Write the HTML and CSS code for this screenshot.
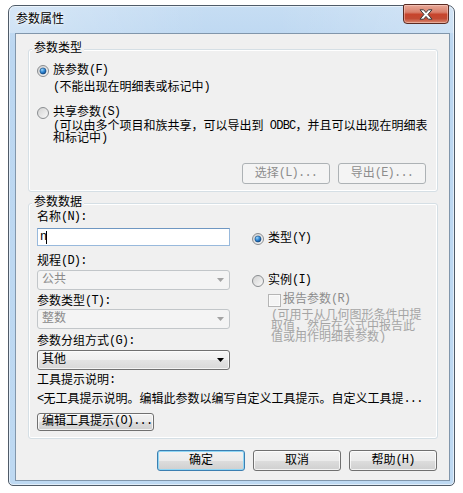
FILE: index.html
```html
<!DOCTYPE html>
<html lang="zh-CN">
<head>
<meta charset="utf-8">
<title>参数属性</title>
<link rel="stylesheet" href="styles.css">
</head>
<body>
<div class="window">
  <div class="titlebar">
    <span class="title">参数属性</span>
    <div class="close">
      <svg width="14" height="11" viewBox="0 0 14 11"><polygon points="1,0.8 4.6,0.8 7,3.6 9.4,0.8 13,0.8 9,5.4 13,10.2 9.4,10.2 7,7.4 4.6,10.2 1,10.2 5,5.4" fill="#fff" stroke="#3a3a3a" stroke-width="1" stroke-linejoin="round"/></svg>
    </div>
  </div>
  <div class="client">
    <fieldset class="group g1">
      <legend>参数类型</legend>
      <div class="g1-body">
        <div class="opt">
          <svg class="radio" width="12" height="12" viewBox="0 0 12 12"><defs><linearGradient id="ra1" x1="0" y1="0" x2="1" y2="1"><stop offset="0" stop-color="#d0d0d0"/><stop offset="1" stop-color="#fbfbfb"/></linearGradient><radialGradient id="rd1" cx="0.35" cy="0.3" r="0.8"><stop offset="0" stop-color="#9bd6fb"/><stop offset="0.5" stop-color="#2f86d4"/><stop offset="1" stop-color="#0c3f7a"/></radialGradient></defs><circle cx="6" cy="6" r="5.5" fill="url(#ra1)" stroke="#8a8d90"/><circle cx="6" cy="6" r="3.1" fill="url(#rd1)" stroke="#1a4a7c" stroke-width="0.6"/></svg>
          <span>族参数<span class="en">(F)</span></span>
        </div>
        <div class="hint h1"><span class="en">(</span>不能出现在明细表或标记中<span class="en">)</span></div>
        <div class="opt o2">
          <svg class="radio" width="12" height="12" viewBox="0 0 12 12"><defs><linearGradient id="ra2" x1="0" y1="0" x2="1" y2="1"><stop offset="0" stop-color="#d0d0d0"/><stop offset="1" stop-color="#fbfbfb"/></linearGradient></defs><circle cx="6" cy="6" r="5.5" fill="url(#ra2)" stroke="#8a8d90"/></svg>
          <span>共享参数<span class="en">(S)</span></span>
        </div>
        <div class="hint h2"><span class="en">(</span>可以由多个项目和族共享，可以导出到<span class="en"> ODBC</span>，并且可以出现在明细表<br>和标记中<span class="en">)</span></div>
        <div class="btnrow">
          <button class="btn dis" type="button">选择<span class="en">(L)...</span></button>
          <button class="btn dis" type="button">导出<span class="en">(E)...</span></button>
        </div>
      </div>
    </fieldset>

    <fieldset class="group g2">
      <legend>参数数据</legend>
      <div class="g2-body">
        <div class="cols">
          <div class="leftcol">
            <div class="lbl">名称<span class="en">(N):</span></div>
            <div class="input"><span class="en">n</span><span class="caret"></span></div>
            <div class="lbl l2">规程<span class="en">(D):</span></div>
            <div class="select dis s1"><span>公共</span><svg class="arrow" width="7" height="4" viewBox="0 0 7 4"><polygon points="0,0 7,0 3.5,4" fill="#a3a3a3"/></svg></div>
            <div class="lbl l3">参数类型<span class="en">(T):</span></div>
            <div class="select dis"><span>整数</span><svg class="arrow" width="7" height="4" viewBox="0 0 7 4"><polygon points="0,0 7,0 3.5,4" fill="#a3a3a3"/></svg></div>
            <div class="lbl l4">参数分组方式<span class="en">(G):</span></div>
            <div class="select s3"><span>其他</span><svg class="arrow" width="7" height="4" viewBox="0 0 7 4"><polygon points="0,0 7,0 3.5,4" fill="#000"/></svg></div>
          </div>
          <div class="rightcol">
            <div class="opt r1">
              <svg class="radio" width="12" height="12" viewBox="0 0 12 12"><defs><linearGradient id="ra3" x1="0" y1="0" x2="1" y2="1"><stop offset="0" stop-color="#d0d0d0"/><stop offset="1" stop-color="#fbfbfb"/></linearGradient><radialGradient id="rd3" cx="0.35" cy="0.3" r="0.8"><stop offset="0" stop-color="#9bd6fb"/><stop offset="0.5" stop-color="#2f86d4"/><stop offset="1" stop-color="#0c3f7a"/></radialGradient></defs><circle cx="6" cy="6" r="5.5" fill="url(#ra3)" stroke="#8a8d90"/><circle cx="6" cy="6" r="3.1" fill="url(#rd3)" stroke="#1a4a7c" stroke-width="0.6"/></svg>
              <span>类型<span class="en">(Y)</span></span>
            </div>
            <div class="opt r2">
              <svg class="radio" width="12" height="12" viewBox="0 0 12 12"><defs><linearGradient id="ra4" x1="0" y1="0" x2="1" y2="1"><stop offset="0" stop-color="#d0d0d0"/><stop offset="1" stop-color="#fbfbfb"/></linearGradient></defs><circle cx="6" cy="6" r="5.5" fill="url(#ra4)" stroke="#8a8d90"/></svg>
              <span>实例<span class="en">(I)</span></span>
            </div>
            <div class="check">
              <span class="box"></span>
              <span>报告参数<span class="en">(R)</span></span>
            </div>
            <div class="graytext"><span class="en">(</span>可用于从几何图形条件中提<br>取值，然后在公式中报告此<br>值或用作明细表参数<span class="en">)</span></div>
          </div>
        </div>
        <div class="lbl l5">工具提示说明<span class="en">:</span></div>
        <div class="tip"><span class="en">&lt;</span>无工具提示说明。编辑此参数以编写自定义工具提示。自定义工具提<span class="en">...</span></div>
        <button class="btn edit" type="button">编辑工具提示<span class="en">(O)...</span></button>
      </div>
    </fieldset>

    <div class="footer">
      <button class="btn default" type="button">确定</button>
      <button class="btn" type="button">取消</button>
      <button class="btn" type="button">帮助<span class="en">(H)</span></button>
    </div>
  </div>
</div>
</body>
</html>
```

FILE: styles.css
```css
* { box-sizing: border-box; }
html, body { margin: 0; padding: 0; background: #fff; }
body {
  font-family: "Liberation Mono", "Noto Sans CJK SC", monospace;
  font-size: 12px;
  line-height: 14px;
  color: #000;
}
.en {
  font-family: "Liberation Mono", monospace;
  font-size: 12px;
  line-height: 10px;
  letter-spacing: -0.8px;
  vertical-align: 1px;
}

.window {
  margin: 5px 0 0 8px;
  width: 447px;
  height: 481px;
  border: 1px solid #4f5b68;
  border-radius: 7px 7px 5px 5px;
  background: linear-gradient(to bottom, #c6ddf3 0, #bcd7f1 40px, #bed9f2 100%);
  box-shadow: inset 0 0 0 1px rgba(255,255,255,0.55);
  display: flex;
  flex-direction: column;
}

.titlebar {
  height: 27px;
  display: flex;
  align-items: flex-start;
  padding-left: 7px;
  border-radius: 6px 6px 0 0;
  background: linear-gradient(to right, rgba(255,255,255,0.28), rgba(255,255,255,0) 45%, rgba(255,255,255,0) 60%, rgba(255,255,255,0.22));
}
.title {
  margin-top: 7px;
  line-height: 14px;
  text-shadow: 0 0 6px #fff, 0 0 3px #fff;
}
.close {
  margin-left: auto;
  margin-right: 5px;
  margin-top: -2px;
  width: 46px;
  height: 20px;
  border: 1px solid #5a2b22;
  border-radius: 2px 2px 4px 4px;
  background: linear-gradient(to bottom, #e9a998 0%, #d9806c 40%, #c7442c 52%, #c24a33 75%, #d98a72 100%);
  box-shadow: inset 0 0 0 1px rgba(255,220,210,0.45);
  display: flex;
  align-items: center;
  justify-content: center;
}
.close svg { display: block; margin-top: 1px; }

.client {
  flex: 1;
  margin: 0 4px 4px 6px;
  border: 1px solid #8196ab;
  background: #f0f0f0;
  padding: 8px 11px 0 12px;
}

.group {
  margin: 0;
  padding: 0;
  min-width: 0;
  border: 1px solid #d5dfe5;
  border-radius: 3px;
  box-shadow: inset 0 0 0 1px #fff;
}
.group legend {
  margin-left: 3px;
  padding: 0 2px;
  line-height: 14px;
  background: #f0f0f0;
}
.g2 { margin-top: 4px; }

.g1-body { padding: 8px 11px 7px 8px; }
.opt {
  display: flex;
  align-items: center;
  height: 14px;
  gap: 4px;
  white-space: nowrap;
}
.radio { display: block; flex: none; }
.hint { padding-left: 16px; white-space: nowrap; }
.h1 { margin-top: 3px; }
.o2 { margin-top: 11px; }
.h2 { margin-top: 1px; line-height: 10.5px; }

.btnrow {
  margin-top: 19px;
  display: flex;
  justify-content: flex-end;
  gap: 8px;
}

.btn {
  font: inherit;
  color: #000;
  width: 88px;
  height: 21px;
  padding: 0;
  border: 1px solid #707070;
  border-radius: 3px;
  background: linear-gradient(to bottom, #f2f2f2 0%, #ebebeb 50%, #dddddd 51%, #cfcfcf 100%);
  box-shadow: inset 0 0 0 1px rgba(255,255,255,0.75);
  white-space: nowrap;
}
.btn.dis {
  color: #8d8d8d;
  border-color: #adb2b5;
  background: #f4f4f4;
  box-shadow: none;
}
.btn.default {
  border-color: #3c7fb1;
  box-shadow: inset 0 0 0 1px #8fd6f5;
}
.btn.edit {
  display: block;
  width: 117px;
  height: 18px;
  margin-top: 6px;
  text-align: left;
  padding-left: 4px;
}

.g2-body { padding: 1px 0 7px 8px; }
.cols { display: flex; }
.leftcol { width: 193px; flex: none; }
.lbl { height: 14px; white-space: nowrap; }
.input {
  margin-top: 3px;
  height: 18px;
  background: #fff;
  border: 1px solid #98b9dc;
  border-top-color: #6f97c2;
  padding-left: 2px;
  display: flex;
  align-items: center;
  line-height: 14px;
}
.caret {
  display: inline-block;
  width: 1px;
  height: 13px;
  background: #000;
}
.l2 { margin-top: 9px; }
.l3 { margin-top: 5px; }
.l4 { margin-top: 6px; }
.l5 { margin-top: 4px; }

.select {
  height: 20px;
  display: flex;
  align-items: center;
  padding-left: 4px;
  border: 1px solid #707070;
  border-radius: 3px;
  background: linear-gradient(to bottom, #f6f6f6 0%, #efefef 50%, #e3e3e3 51%, #d8d8d8 100%);
  box-shadow: inset 0 0 0 1px rgba(255,255,255,0.7);
}
.select.dis {
  border-color: #c2c6c9;
  background: #f4f4f4;
  color: #8a8a8a;
  box-shadow: none;
}
.s1 { margin-top: 1px; }
.s3 { margin-top: 1px; }
.arrow { display: block; margin-left: auto; margin-right: 5px; }

.rightcol { margin-left: 22px; }
.r1 { margin-top: 21px; }
.r2 { margin-top: 28px; }
.check {
  margin-top: 5px;
  padding-left: 16px;
  display: flex;
  align-items: center;
  gap: 2px;
  height: 14px;
  color: #8d8d8d;
  white-space: nowrap;
}
.box {
  display: block;
  width: 13px;
  height: 13px;
  border: 1px solid #b5b5b5;
  background: #f4f4f4;
  box-shadow: inset 0 0 0 1px #fafafa;
}
.graytext {
  margin-top: 3px;
  padding-left: 19px;
  line-height: 10.5px;
  color: #a5a5a5;
  white-space: nowrap;
}

.tip { margin-top: 5px; height: 14px; white-space: nowrap; }

.footer {
  margin-top: 11px;
  margin-right: 1px;
  display: flex;
  justify-content: flex-end;
  gap: 8px;
}
```
